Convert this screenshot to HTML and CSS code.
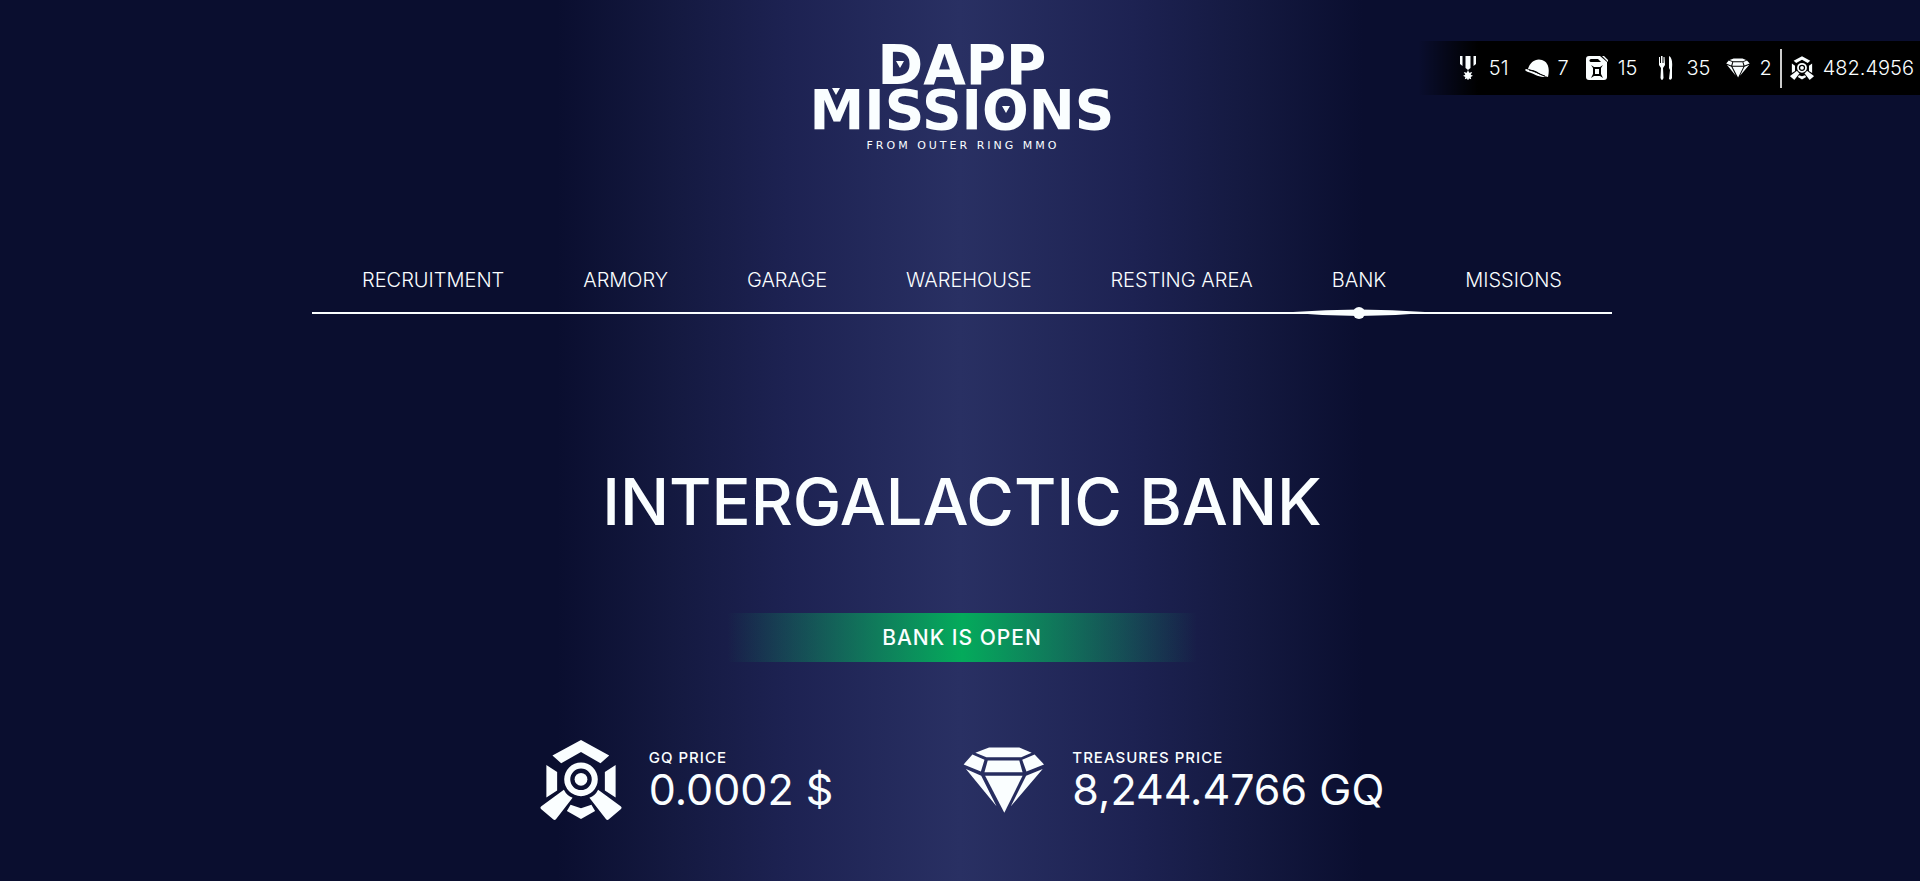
FILE: index.html
```html
<!DOCTYPE html>
<html lang="en">
<head>
    <meta charset="UTF-8">
    <meta name="viewport" content="width=device-width, initial-scale=1.0">
    <title>Dapp Missions - Bank</title>
    <link rel="stylesheet" href="styles.css">
</head>
<body>
    <!-- Shared icons -->
    <svg class="icon-defs" aria-hidden="true">
        <symbol id="icon-gq" viewBox="56 60 244 242">
            <path d="M178 62 262 108 236 131 178 98 119 131 93 108z"/>
            <path d="M75 136 107 157V212L75 233zM281 136 249 157V212L281 233z"/>
            <path fill-rule="evenodd" d="M178 129a50 50 0 1 0 0 100a50 50 0 1 0 0-100zM178 147a32 32 0 1 1 0 64a32 32 0 1 1 0-64z"/>
            <circle cx="178" cy="179" r="19"/>
            <path d="M127 210Q136 228 153 234L104 297Q100 302 95 298L59 267Q55 263 60 259zM229 210Q220 228 203 234L252 297Q256 302 261 298L297 267Q301 263 296 259z"/>
            <path d="M147 255 178 265 209 255 220 273 178 297 136 273z"/>
        </symbol>
        <symbol id="icon-gem" viewBox="40 80 252 206">
            <path d="M120 83H213L251 99 219 113H112L78 99z"/>
            <path d="M69 105 106 121 95 157 42 135zM260 105 289 135 235 157 222 121z"/>
            <path d="M116 123H213L223 159H106z"/>
            <path d="M49 149 96 170 143 264zM285 149 234 170 187 264z"/>
            <path d="M108 170H223L167 284z"/>
        </symbol>
    </svg>

    <header class="header">
        <a class="logo" href="#" aria-label="Dapp Missions from Outer Ring MMO">
            <svg viewBox="0 0 320 114">
                <text class="logo-name" x="160" y="43">DAPP</text>
                <text class="logo-name" x="160" y="88">MISSIONS</text>
                <text class="logo-tagline" x="161" y="108">FROM OUTER RING MMO</text>
                <path d="M94 20h8l-4 7zM200 65h8l-4 7zM30 47h8l-4 7z"/>
            </svg>
        </a>

        <ul class="stats">
            <li class="stat">
                <svg class="stat-icon" viewBox="0 0 24 24">
                    <path d="M4 0h2.500v10L4 8zM9.500 0h5v12L12 14l-2.500-2zM17.500 0H20v8l-2.500 2z"/>
                    <path d="M12 14l1.200 2.800 3-.8-1.500 2.800 2.300 1-2.300 1.200.5 2.200-2.200-.7L12 24.500l-1-2-2.200.7.500-2.200L7 19.800l2.300-1L7.800 16l3 .8z"/>
                </svg>
                <span>51</span>
            </li>
            <li class="stat">
                <svg class="stat-icon" viewBox="0 0 24 24">
                    <path d="M3 13C5 6 11 2 17 4c6 2 8 8 6 17-4-1-6-2-9-4-4-3-7-3-11-4z"/>
                    <path d="M1 13c-2 1 0 2 2 3 5 1 10 5 15 5l3-1c-4 0-6-2-9-3-4-2-7-3-11-4z"/>
                    <path class="cut-line" d="M4 14c6 1 9 4 16 6"/>
                </svg>
                <span>7</span>
            </li>
            <li class="stat">
                <svg class="stat-icon" viewBox="0 0 24 24">
                    <path d="M4 0h11l7 6v15q0 3-3 3H4q-3 0-3-3V3q0-3 3-3z"/>
                    <path d="M17 0h2l4 4v2z"/>
                    <path class="cut" d="M6 3h7l3 3H6q-1.500 0-1.500-1.500T6 3z"/>
                    <path class="cut" fill-rule="evenodd" d="M6 9l3 2h6l3-2-2 3v6l2 4-3-2H9l-3 2 2-4v-6zM10 13v5h4v-5z"/>
                </svg>
                <span>15</span>
            </li>
            <li class="stat">
                <svg class="stat-icon" viewBox="0 0 24 24">
                    <path d="M5 1h1v6h1V0h1.500v7h1V1h1l.5 8-2 3 .500 10q-1.500 4-3 0L7 12 5 9z"/>
                    <path d="M15 0q4 2 3 12v10q-1 3-3 1l1-9-1-2z"/>
                </svg>
                <span>35</span>
            </li>
            <li class="stat">
                <svg class="stat-icon"><use href="#icon-gem"/></svg>
                <span>2</span>
            </li>
            <li class="stat stat-balance">
                <svg class="stat-icon"><use href="#icon-gq"/></svg>
                <span>482.4956</span>
            </li>
        </ul>
    </header>

    <nav class="menu">
        <a href="#">RECRUITMENT</a>
        <a href="#">ARMORY</a>
        <a href="#">GARAGE</a>
        <a href="#">WAREHOUSE</a>
        <a href="#">RESTING AREA</a>
        <a class="active" href="#" aria-current="page">BANK
            <svg class="menu-marker" viewBox="0 0 132 14" aria-hidden="true">
                <path d="M0 6Q66 1 132 6V7Q66 13 0 7z"/>
                <circle cx="66" cy="7" r="6"/>
            </svg>
        </a>
        <a href="#">MISSIONS</a>
    </nav>

    <main class="bank">
        <h1>INTERGALACTIC BANK</h1>
        <p class="bank-status">BANK IS OPEN</p>

        <div class="prices">
            <section class="price">
                <svg class="price-icon" aria-hidden="true"><use href="#icon-gq"/></svg>
                <div>
                    <h2>GQ PRICE</h2>
                    <p class="price-value">0.0002 $</p>
                </div>
            </section>
            <section class="price">
                <svg class="price-icon" aria-hidden="true"><use href="#icon-gem"/></svg>
                <div>
                    <h2>TREASURES PRICE</h2>
                    <p class="price-value">8,244.4766 GQ</p>
                </div>
            </section>
        </div>
    </main>
</body>
</html>
```
FILE: styles.css
```css
/* Global Styles */
* {
    box-sizing: border-box;
}

body {
    margin: 0;
    padding-left: 4px;
    min-height: 100vh;
    font-family: Inter, "Liberation Sans", sans-serif;
    color: #fafeff;
    background: linear-gradient(90deg, #0a0e2f 29%, #141940 35%, #1d2252 41%, #293063 50%, #1d2252 59%, #141940 65%, #0a0e2f 71%);
    overflow-x: hidden;
}

h1, h2, p, ul {
    margin: 0;
    padding: 0;
}

a {
    color: inherit;
    text-decoration: none;
}

svg {
    display: block;
    fill: currentColor;
}

.icon-defs {
    display: none;
}

/* Header */
.header {
    display: grid;
    grid-template-columns: 1fr 320px 1fr;
    align-items: start;
    padding-top: 41px;
}

.logo {
    grid-column: 2;
}

.logo svg {
    overflow: visible;
}

.logo-name {
    font-family: "DejaVu Sans", sans-serif;
    font-size: 55px;
    font-weight: 700;
    text-anchor: middle;
}

.logo-tagline {
    font-family: "DejaVu Sans", sans-serif;
    font-size: 11px;
    letter-spacing: 3px;
    text-anchor: middle;
}

/* Resource counters */
.stats {
    display: flex;
    align-items: center;
    justify-self: end;
    gap: 16px;
    height: 54px;
    padding: 0 6px 0 38px;
    list-style: none;
    font-size: 20px;
    font-weight: 300;
    background: linear-gradient(90deg, transparent, #000 60px);
}

.stat {
    display: flex;
    align-items: center;
    gap: 9px;
}

.stat-icon {
    width: 24px;
    height: 24px;
}

.stat-balance {
    height: 39px;
    margin-left: -8px;
    padding-left: 8px;
    border-left: 2px solid #ccc;
}

.cut {
    fill: #000;
}

.cut-line {
    fill: none;
    stroke: #000;
}

/* Navigation */
.menu {
    display: flex;
    justify-content: space-between;
    max-width: 1300px;
    margin: 113px auto 0;
    padding: 0 50px;
    border-bottom: 2px solid #fafeff;
    font-size: 20px;
    font-weight: 300;
    line-height: 24px;
}

.menu a {
    position: relative;
    padding-bottom: 20px;
}

.menu-marker {
    position: absolute;
    bottom: -8px;
    left: 50%;
    width: 132px;
    transform: translateX(-50%);
}

/* Bank */
.bank {
    display: flex;
    flex-direction: column;
    align-items: center;
    padding: 148px 20px 40px;
}

h1 {
    font-size: 65px;
    font-weight: 500;
    line-height: 80px;
}

.bank-status {
    width: 470px;
    max-width: 100%;
    margin-top: 71px;
    text-align: center;
    font-size: 21px;
    font-weight: 500;
    line-height: 49px;
    letter-spacing: 1px;
    background: linear-gradient(90deg, transparent, #04aa5b 50%, transparent);
}

.prices {
    display: flex;
    flex-wrap: wrap;
    justify-content: center;
    gap: 130px;
    margin-top: 77px;
}

.price {
    display: flex;
    align-items: center;
    gap: 27px;
}

.price-icon {
    width: 82px;
    height: 82px;
}

h2 {
    font-size: 15px;
    font-weight: 500;
    line-height: 18px;
    letter-spacing: 1px;
}

.price-value {
    font-size: 43px;
    line-height: 44px;
}
```
